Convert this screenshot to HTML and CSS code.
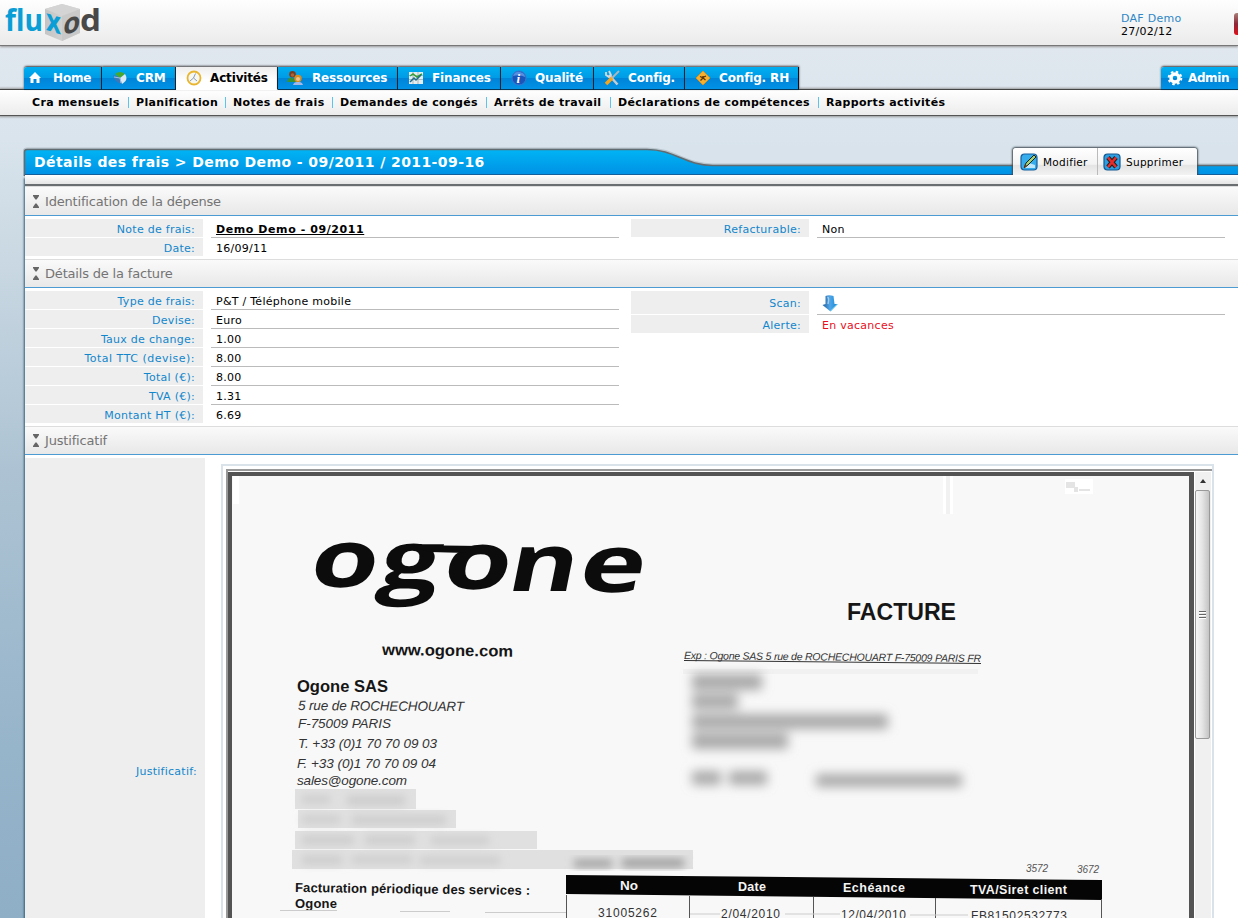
FILE: index.html
```html
<!DOCTYPE html>
<html lang="fr">
<head>
<meta charset="utf-8">
<title>Fluxod - Détails des frais</title>
<link rel="stylesheet" href="styles.css">
</head>
<body>
<header class="top">
  <svg class="logo" width="100" height="42" viewBox="0 0 100 42" font-family="Open Sans, sans-serif" font-weight="700">
    <defs><linearGradient id="cube" x2="1" y2="0"><stop offset="0" stop-color="#c4c4c4"/><stop offset="1" stop-color="#dedede"/></linearGradient></defs>
    <path d="M45 9 62 4 80 9 80 33 62 41 45 34Z" fill="url(#cube)"/>
    <path d="M45 9 62 4 80 9 62 16Z" fill="#d4d4d4"/>
    <path d="M62 16 80 9V33L62 41Z" fill="#c9c9c9"/>
    <text x="5" y="30.500" font-size="31" fill="#0a9ed6" textLength="38" lengthAdjust="spacingAndGlyphs">flu</text>
    <text transform="matrix(1 .3 0 1 46 30)" font-size="31" fill="#0a9ed6" textLength="15" lengthAdjust="spacingAndGlyphs">x</text>
    <text transform="matrix(1 -.3 -.1 1 62.500 35.500)" font-size="29" fill="#484848" textLength="17" lengthAdjust="spacingAndGlyphs">o</text>
    <text x="80" y="30.500" font-size="30" fill="#484848" textLength="21" lengthAdjust="spacingAndGlyphs">d</text>
  </svg>
  <div class="user"><a>DAF Demo</a><span>27/02/12</span></div>
  <i class="logout"></i>
</header>

<nav class="tabs">
  <a class="tab home"><svg width="16" height="16" viewBox="0 0 16 16"><path d="M8 2 14 8H12.500V13H9.500V9H6.500V13H3.500V8H2Z" fill="#fff"/></svg><span>Home</span></a>
  <a class="tab crm"><svg width="16" height="16" viewBox="0 0 16 16"><path d="M1 5 8 7 10 14Q3 13 1 5Z" fill="#3c78b8"/><path d="M3 4Q8 0 13 4L8 8Z" fill="#47a82d"/><path d="M8 8 13 4Q17 10 10 14Z" fill="#dce8f3"/><path d="M2 7 8 8 9 13" fill="none" stroke="#9cc1e5"/></svg><span>CRM</span></a>
  <a class="tab act active"><svg width="16" height="16" viewBox="0 0 16 16"><circle cx="8" cy="8" r="6.500" fill="#f7f7f1" stroke="#e9b52e" stroke-width="1.800"/><path d="M9.500 3.500 7.500 8 4 11M7.500 8 11 11" fill="none" stroke="#8a9ab8"/></svg><span>Activités</span></a>
  <a class="tab res"><svg width="16" height="16" viewBox="0 0 16 16"><path d="M0 12Q1 7 5 7.500L10 12Z" fill="#389334"/><circle cx="5.500" cy="4.300" r="3.300" fill="#7b3c1d"/><circle cx="5.500" cy="5" r="1.800" fill="#a8653a"/><circle cx="11" cy="8.500" r="3.700" fill="#d88d22"/><circle cx="11" cy="9" r="2" fill="#f2c28a"/><path d="M6 15Q7 11.500 11 12 15 11.500 16 15Z" fill="#a4b8e8"/></svg><span>Ressources</span></a>
  <a class="tab fin"><svg width="16" height="16" viewBox="0 0 16 16"><rect x="1" y="2" width="14" height="12" fill="#e4eef0"/><path d="M1 5.500H15M1 9.500H15M5 2V14M10 2V14" stroke="#a9b9bd"/><path d="M2 6 5 4 9 7 14 4" fill="none" stroke="#35a135" stroke-width="1.500"/><path d="M2 12 6 8 8 10 13 5" fill="none" stroke="#226c8b" stroke-width="1.500"/></svg><span>Finances</span></a>
  <a class="tab qua"><svg width="16" height="16" viewBox="0 0 16 16"><circle cx="8" cy="8" r="7" fill="#1955bb" stroke="#3877cf"/><path d="M2 6Q4 1 9 2 14 3 14 7 9 4 2 6Z" fill="#568fe0"/><text x="5.500" y="12.500" font-family="Liberation Serif" font-style="italic" font-weight="700" font-size="13" fill="#fff">i</text></svg><span>Qualité</span></a>
  <a class="tab cfg"><svg width="16" height="16" viewBox="0 0 16 16"><path d="M5 5 13.500 14.500" stroke="#c7ccd2" stroke-width="2.500"/><path d="M2 2V5L5 7 7 5 5 1" fill="none" stroke="#d6dade" stroke-width="1.800"/><path d="M15 1 8 8" stroke="#aeb5bb" stroke-width="1.800"/><path d="M8 8 2 14" stroke="#f3a51e" stroke-width="3.500"/></svg><span>Config.</span></a>
  <a class="tab rh"><svg width="16" height="16" viewBox="0 0 16 16"><path d="M8 1 15 8 8 15 1 8Z" fill="#f6b02e" stroke="#d8931c"/><path d="M5 6.500 7.500 7.500 11 6M8 6V8L5.500 10.500M8 8 10.500 10" fill="none" stroke="#58340c" stroke-width="1.300"/></svg><span>Config. RH</span></a>
  <a class="tab admin"><svg width="16" height="16" viewBox="0 0 16 16"><circle cx="8" cy="8" r="4" fill="none" stroke="#fff" stroke-width="3.400"/><circle cx="8" cy="8" r="6.300" fill="none" stroke="#fff" stroke-width="2" stroke-dasharray="2.474 2.474"/></svg><span>Admin</span></a>
</nav>
<nav class="subnav">
  <a>Cra mensuels</a><a>Planification</a><a>Notes de frais</a><a>Demandes de congés</a><a>Arrêts de travail</a><a>Déclarations de compétences</a><a>Rapports activités</a>
</nav>

<main class="panel">
  <div class="titlebar">
    <svg class="titleshape" width="1217" height="32" viewBox="0 0 1217 32">
      <defs><linearGradient id="blue" gradientUnits="userSpaceOnUse" x1="0" y1="4" x2="0" y2="30"><stop offset="0" stop-color="#00b4f4"/><stop offset="1" stop-color="#008fe4"/></linearGradient></defs>
      <path d="M1.500 30V6Q1.500 3.500 4 3.500H624C652 3.500 662 19.500 690 19.500H1217" fill="none" stroke="#8b999f" stroke-width="4" opacity=".4"/>
      <path d="M1.500 30V6Q1.500 3.500 4 3.500H624C652 3.500 662 19.500 690 19.500H1219V29.500H1.500Z" fill="url(#blue)" stroke="#626b70" stroke-width="1.500"/>
      <path d="M2 29H1217" stroke="#125f9b" stroke-width="2"/>
    </svg>
    <h1>Détails des frais &gt; Demo Demo - 09/2011 / 2011-09-16</h1>
    <div class="actions">
      <a class="edit"><svg width="18" height="18" viewBox="0 0 18 18"><rect x="1" y="1" width="16" height="16" rx="3.500" fill="#36acec" stroke="#175e9c" stroke-width="1.200"/><path d="M3 15 9 10 15 12V15Z" fill="#bfe6fb"/><path d="M4 15 6 10 14 2 16 4 8 12Z" fill="#a5cf73" stroke="#18251b"/><path d="M4 15 5 11 7 13Z" fill="#713e16"/></svg><span>Modifier</span></a>
      <a class="del"><svg width="18" height="18" viewBox="0 0 18 18"><rect x="1" y="1" width="16" height="16" rx="3.500" fill="#2e9ee3" stroke="#15588f" stroke-width="1.200"/><path d="M5 4.500 13 14M13 4.500 5 14" stroke="#202020" stroke-width="4.600"/><path d="M5 4.500 13 14M13 4.500 5 14" stroke="#e72c2c" stroke-width="2.600"/></svg><span>Supprimer</span></a>
    </div>
  </div>
  <div class="strip"></div>

  <h2 class="first"><i class="fold"></i>Identification de la dépense</h2>
  <section class="fields">
    <dl>
      <div class="row"><dt>Note de frais:</dt><dd><b>Demo Demo - 09/2011</b></dd></div>
      <div class="row"><dt>Date:</dt><dd>16/09/11</dd></div>
    </dl>
    <dl>
      <div class="row lined"><dt>Refacturable:</dt><dd>Non</dd></div>
    </dl>
  </section>

  <h2><i class="fold"></i>Détails de la facture</h2>
  <section class="fields">
    <dl>
      <div class="row"><dt>Type de frais:</dt><dd>P&amp;T / Téléphone mobile</dd></div>
      <div class="row"><dt>Devise:</dt><dd>Euro</dd></div>
      <div class="row"><dt>Taux de change:</dt><dd>1.00</dd></div>
      <div class="row"><dt class="wide">Total TTC (devise):</dt><dd>8.00</dd></div>
      <div class="row"><dt>Total (€):</dt><dd>8.00</dd></div>
      <div class="row"><dt>TVA (€):</dt><dd>1.31</dd></div>
      <div class="row"><dt>Montant HT (€):</dt><dd>6.69</dd></div>
    </dl>
    <dl>
      <div class="row tall"><dt>Scan:</dt><dd><svg width="16" height="17" viewBox="0 0 16 17"><defs><linearGradient id="arr"><stop offset="0" stop-color="#245f9d"/><stop offset=".5" stop-color="#4ea6e8"/><stop offset="1" stop-color="#1688d8"/></linearGradient></defs><path d="M3.500 1Q7-.500 11.500 1L12.500 9H15.500L8.500 16.500 .500 10 3.500 9Z" fill="url(#arr)"/><path d="M5.500 2Q7.500 3 6 9" fill="none" stroke="#a9c9e2" stroke-width="1.500"/><path d="M8.500 16 15.500 9" stroke="#79d3ee"/></svg></dd></div>
      <div class="row"><dt>Alerte:</dt><dd class="alert">En vacances</dd></div>
    </dl>
  </section>

  <h2><i class="fold"></i>Justificatif</h2>
  <section class="proof">
    <div class="prooflabel">Justificatif:</div>
    <div class="frame"><div class="inner">
      <svg class="doc" width="957" height="442" viewBox="232 476 957 442" font-family="Liberation Sans, Arial, sans-serif" fill="#161616">
        <defs>
          <filter id="b6" x="-20%" y="-100%" width="140%" height="300%"><feGaussianBlur stdDeviation="5.500"/></filter>
          <filter id="b3" x="-10%" y="-50%" width="120%" height="200%"><feGaussianBlur stdDeviation="4"/></filter>
        </defs>
        <path d="M233 476h6v28h-6zM943 476h3v38h-3zM950 476h3v38h-3z" fill="#fff"/>
        <path d="M946 476h4v38h-4z" fill="#f1f1f1"/>
        <path d="M1065 479h28v15h-28z" fill="#fff"/><path d="M1066 482h9v6h-9zM1074 487h4v5h-4zM1079 489h11v2h-11z" fill="#e4e4e4"/>
        <g font-family="Open Sans, sans-serif" font-weight="700" fill="#0c0c0c">
          <text transform="matrix(1.360 0 -.2 1 307 587)" font-size="80">o</text>
          <text transform="matrix(1.340 0 -.2 1 376 588)" font-size="80">g</text>
          <text transform="matrix(1.360 0 -.2 1 440 589)" font-size="80">o</text>
          <text transform="matrix(1.310 0 -.2 1 505 591)" font-size="80">n</text>
          <text transform="matrix(1.380 0 -.2 1 576 592)" font-size="80">e</text>
          <path d="M408 545 480 546 466 553 430 552Z"/>
        </g>
        <g font-weight="700">
          <text transform="translate(382 655) rotate(.7)" font-size="16" textLength="131" lengthAdjust="spacingAndGlyphs">www.ogone.com</text>
          <text x="847" y="620" font-size="23" textLength="109" lengthAdjust="spacingAndGlyphs">FACTURE</text>
          <text x="297" y="692" font-size="17" textLength="91" lengthAdjust="spacingAndGlyphs">Ogone SAS</text>
        </g>
        <g font-style="italic" font-size="13.500" fill="#333">
          <text transform="translate(298 710) rotate(.4)" textLength="166">5 rue de ROCHECHOUART</text>
          <text x="298" y="728" textLength="93">F-75009 PARIS</text>
          <text x="298" y="748" textLength="139">T. +33 (0)1 70 70 09 03</text>
          <text x="297" y="768" textLength="139">F. +33 (0)1 70 70 09 04</text>
          <text x="297" y="785" textLength="110">sales@ogone.com</text>
        </g>
        <g transform="translate(684 659) rotate(.6)">
          <text font-style="italic" font-size="10.500" fill="#333" textLength="297">Exp : Ogone SAS  5 rue de ROCHECHOUART  F-75009 PARIS FR</text>
          <path d="M0 1.500H297" stroke="#333"/>
        </g>
        <path d="M683 669H978V674H683Z" fill="#f1f1f1"/>
        <g fill="#969696" filter="url(#b6)">
          <path d="M692 674h70v16h-70zM692 694h46v15h-46zM692 714h196v15h-196zM692 733h96v16h-96zM692 771h29v14h-29zM729 771h38v14h-38zM816 774h117v13h-117zM895 774h67v13h-67z" opacity=".8"/>
        </g>
        <g>
          <path d="M295 789h121v20h-121zM298 810h158v18h-158zM295 831h242v18h-242zM292 850h401v19h-401z" fill="#e0e0e0"/>
          <g fill="#cbcbcb" filter="url(#b3)"><path d="M302 796h28v7h-28zM347 796h58v9h-58zM302 816h38v7h-38zM352 816h94v8h-94zM302 836h52v8h-52zM365 836h50v8h-50zM431 837h58v7h-58zM302 856h40v8h-40zM352 856h60v7h-60zM420 857h80v7h-80z"/></g>
          <path d="M574 860h38v7h-38zM622 859h62v8h-62z" fill="#999" filter="url(#b3)"/>
        </g>
        <g font-weight="700">
          <text transform="translate(295 892) rotate(.7)" font-size="13" textLength="235">Facturation périodique des services :</text>
          <text x="295" y="908" font-size="13" textLength="42">Ogone</text>
        </g>
        <path d="M566 875 1102 880V900L566 894Z" fill="#050505"/>
        <g fill="#f4f4f4" font-weight="700" font-size="12.500">
          <text x="620" y="889.500" textLength="18" lengthAdjust="spacingAndGlyphs">No</text>
          <text x="738" y="891" textLength="28">Date</text>
          <text x="843" y="892" textLength="62">Echéance</text>
          <text x="970" y="894" textLength="97">TVA/Siret client</text>
        </g>
        <g font-size="12" fill="#333">
          <text x="598" y="917" textLength="59">31005262</text>
          <text x="721" y="918" textLength="59">2/04/2010</text>
          <text x="841" y="919" textLength="65">12/04/2010</text>
          <text x="971" y="920" textLength="96">FB81502532773</text>
        </g>
        <g font-style="italic" font-size="10" fill="#555"><text x="1026" y="872" textLength="22">3572</text><text x="1077" y="873" textLength="22">3672</text></g>
        <path d="M566.500 895V918M689.500 896V918M813.500 897V918M935.500 898V918M1101.500 899V918" stroke="#555"/>
        <path d="M280 910.500H337M400 911.500H450M485 912.500H566M690 914H720M785 914H840M910 915H968" stroke="#ccc"/>
      </svg>
      <div class="scroll"><i class="up"></i><div class="thumb"><i></i><i></i><i></i></div></div>
    </div></div>
  </section>
</main>
</body>
</html>
```
FILE: styles.css
```css
* { box-sizing: border-box; }
body {
  margin: 0;
  height: 918px;
  overflow: hidden;
  font: 11px/13px "DejaVu Sans", Verdana, sans-serif;
  letter-spacing: .27px;
  color: #000;
  background: linear-gradient(#e0e7ef 45px, #d9e4ec 140px, #ccdae4 240px, #adc3d3 470px, #96b4ca 750px, #8fafc7 918px);
}
svg { letter-spacing: 0; }
.top {
  display: flex;
  height: 46px;
  background: linear-gradient(#fefefe, #ebebeb);
  border-bottom: 1px solid #777;
  box-shadow: 0 1px 2px #999;
}
.logo { flex: none; overflow: visible; }
.user { display: flex; flex-direction: column; margin: 12px 0 0 1021px; width: 113px; flex: none; }
.user a { color: #2f87c6; }
.logout { width: 4px; height: 22px; margin-top: 13px; border-radius: 3px 0 0 3px; background: linear-gradient(#a88078, #8e2638 50%, #e20d17); flex: none; }

.tabs { display: flex; position: relative; z-index: 1; height: 23px; margin: 21px 0 -1px 24px; }
.tab {
  display: flex;
  flex: none;
  align-items: center;
  height: 23px;
  border-right: 1px solid #06111c;
  border-bottom: 1px solid #06385c;
  background: linear-gradient(#00aef0, #009ce6 48%, #0084d8 52%, #0092e6);
  box-shadow: 0 -1px 2px #444;
  color: #fff;
  font-size: 12px;
  letter-spacing: -.15px;
  font-weight: bold;
}
.tab svg { flex: none; }
.tab span { white-space: nowrap; padding-top: 1px; }
.home { width: 78px; padding-left: 3px; border-top-left-radius: 3px; }
.home span { margin-left: 10px; }
.crm { width: 74px; padding-left: 10px; }
.crm span { margin-left: 8px; }
.act { width: 102px; padding-left: 10px; }
.act span { margin-left: 8px; }
.res { width: 120px; padding-left: 9px; }
.res span { margin-left: 9px; }
.fin { width: 103px; padding-left: 10px; }
.fin span { margin-left: 8px; }
.qua { width: 93px; padding-left: 10px; }
.qua span { margin-left: 8px; }
.cfg { width: 91px; padding-left: 10px; }
.cfg span { margin-left: 8px; }
.rh { width: 114px; padding-left: 10px; }
.rh span { margin-left: 8px; }
.admin { width: 78px; margin-left: auto; margin-right: -1px; padding-left: 6px; border-top-left-radius: 3px; }
.admin span { margin-left: 5px; letter-spacing: -.4px; }
.active { background: linear-gradient(#eee, #fff 60%); color: #000; border-bottom-color: #fff; }

.subnav {
  display: grid;
  grid-template-columns: 104px 97px 107px 154px 124px 208px 1fr;
  height: 27px;
  padding: 6px 0 0 32px;
  background: linear-gradient(#fff, #ececec);
  border-top: 1px solid #444;
  border-bottom: 1px solid #555;
  box-shadow: 0 0 2px 1px #999;
  font-weight: bold;
  letter-spacing: .33px;
}
.subnav a { white-space: nowrap; }
.subnav a + a { margin-left: -8px; padding-left: 8px; background: linear-gradient(#5cc4ec, #5cc4ec) 0 1px / 1px 11px no-repeat; }

.panel { margin: 30px 0 0 25px; height: 772px; background: #fff; box-shadow: -1px 32px 2px #345f78; }
.titlebar { display: flex; position: relative; height: 30px; background: #d8e3eb; }
.titleshape { position: absolute; left: -2px; top: 0; }
h1 { position: relative; margin: 7px 0 0 9px; width: 460px; font-size: 14px; line-height: 18px; letter-spacing: .42px; font-weight: bold; color: #fff; white-space: nowrap; }
.actions {
  display: flex;
  position: relative;
  width: 184px;
  height: 27px;
  margin: 2px 41px 0 auto;
  border-radius: 3px 3px 0 0;
  background: linear-gradient(#fff, #f3f3f3 60%, #e4e4e4 65%, #f2f2f2);
  box-shadow: 0 0 2px 1px #3d4850;
}
.actions a { display: flex; align-items: center; height: 28px; padding-left: 7px; }
.actions span { margin-left: 5px; font-size: 10.500px; letter-spacing: .28px; }
.edit { width: 85px; border-right: 1px solid #bbb; }
.actions .del { padding-left: 5px; }
.strip { position: relative; height: 11px; margin-top: -1px; background: linear-gradient(#fff, #e5e5e5); border-bottom: 2px solid #6a6e70; }
h2 {
  display: flex;
  align-items: center;
  height: 29px;
  margin: 3px 0;
  padding-left: 8px;
  border-top: 1px solid #ddd;
  border-bottom: 1px solid #4d9bd3;
  background: linear-gradient(#fafafa, #e8e8e8);
  color: #747474;
  font-size: 13px;
  letter-spacing: -.18px;
  font-weight: normal;
}
h2.first { height: 30px; margin-top: 0; padding-top: 1px; }
.fold { width: 6px; height: 13px; margin-right: 6px; background: #666; clip-path: polygon(0 0, 100% 0, 100% 8%, 60% 34%, 40% 34%, 40% 66%, 60% 66%, 100% 92%, 100% 100%, 0 100%, 0 92%, 40% 66%, 40% 34%, 0 8%); }
.fields { display: grid; grid-template-columns: 606px 594px; }
dl { margin: 0; }
.row { display: grid; grid-template-columns: 178px 1fr; column-gap: 8px; height: 19px; padding-right: 12px; }
.fields dl:last-child .row { padding-right: 0; }
.row:last-child { height: 18px; }
.row.tall { height: 24px; }
.row.lined { height: 19px; }
dt { padding: 4px 8px 0 0; background: #eee; border-bottom: 1px solid #fff; color: #1286cc; text-align: right; white-space: nowrap; }
dd { margin: 0; padding: 4px 0 0 5px; border-bottom: 1px solid #bbb; }
.wide { letter-spacing: .5px; }
.row:last-child:not(.lined) dt, .row:last-child:not(.lined) dd { border-bottom: 0; }
.tall dt { padding-top: 6px; }
.tall dd { padding-top: 4px; height: 24px; }
dd b { text-decoration: underline; letter-spacing: .58px; }
.alert { color: #e8101c; }

.proof { display: flex; height: 600px; }
.prooflabel { width: 180px; padding: 307px 8px 0 0; background: #eee; color: #1286cc; text-align: right; flex: none; }
.frame { width: 993px; margin: 6px 0 0 16px; padding: 3px 0 0 3px; border: 2px solid #d9e3e9; flex: none; }
.inner { display: flex; height: 600px; border-top: 2px solid #999; border-left: 2px solid #999; padding-top: 1px; }
.doc { box-sizing: content-box; flex: none; border: solid #545454; border-width: 4px 5px 0 4px; background: #f8f8f8; }
.scroll { width: 16px; margin-left: 1px; background: #f0f0f0; }
.up { display: block; width: 0; margin: 7px 0 7px 5px; border: 3px solid transparent; border-top: 0; border-bottom: 4px solid #333; }
.thumb { display: flex; flex-direction: column; align-items: center; justify-content: center; gap: 1px; width: 15px; height: 249px; border: 1px solid #999; border-radius: 2px; background: linear-gradient(90deg, #f6f6f6, #e6e6e6 45%, #c4c4c4); }
.thumb i { width: 7px; height: 2px; background: #666; border-bottom: 1px solid #fff; }
```
